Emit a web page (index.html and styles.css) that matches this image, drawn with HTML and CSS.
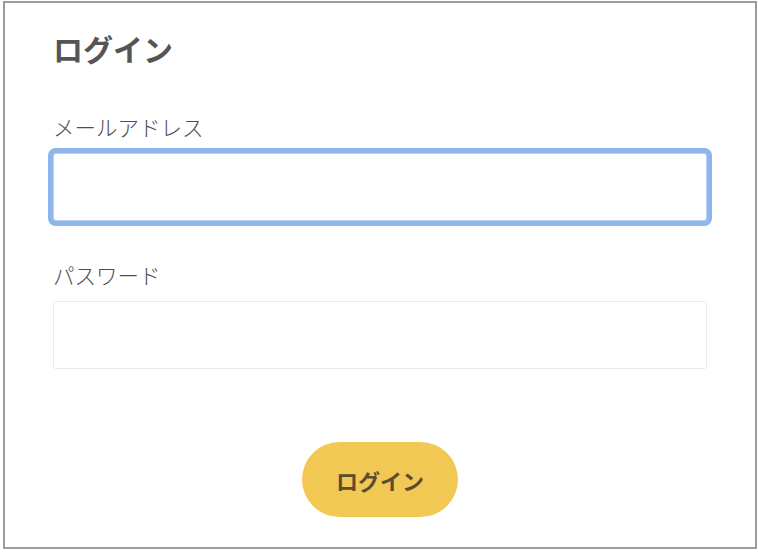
FILE: index.html
```html
<!DOCTYPE html>
<html lang="ja">
<head>
    <meta charset="UTF-8">
    <meta name="viewport" content="width=device-width, initial-scale=1.0">
    <title>ログイン</title>
    <link rel="stylesheet" href="styles.css">
</head>
<body>
    <div class="login-card">
        <h1 class="login-title">ログイン</h1>

        <form class="login-form">
            <div class="field">
                <label class="field-label" for="email">メールアドレス</label>
                <input class="field-input is-focused" id="email" type="email">
            </div>

            <div class="field">
                <label class="field-label" for="password">パスワード</label>
                <input class="field-input" id="password" type="password">
            </div>

            <div class="actions">
                <button class="login-button" type="button">ログイン</button>
            </div>
        </form>
    </div>
</body>
</html>
```

FILE: styles.css
```css
/* ページ全体 */
body {
    margin: 0;
    background-color: #fff;
    font-family: "Noto Sans CJK JP", "Noto Sans", sans-serif;
    color: #555;
}

/* ログインカード */
.login-card {
    box-sizing: border-box;
    width: 754px;
    height: 548px;
    margin: 1px 0 0 3px;
    padding: 25px 48px 0;
    border: 2px solid #9c9c9c;
    background-color: #fff;
}

/* 見出し */
.login-title {
    margin: 0 0 44px;
    font-size: 30px;
    line-height: 40px;
    font-weight: 700;
    color: #555;
}

/* 入力欄 */
.field {
    display: flex;
    flex-direction: column;
    margin-bottom: 39px;
}

.field-label {
    margin-bottom: 11px;
    font-size: 21.5px;
    line-height: 30px;
    font-weight: 300;
    color: #4f4f4f;
}

.field-input {
    box-sizing: border-box;
    width: 654px;
    height: 68px;
    padding: 0 16px;
    border: 1px solid #e8e8e8;
    border-radius: 3px;
    font-size: 20px;
    font-family: inherit;
    background-color: #fff;
    outline: none;
}

.field-input.is-focused {
    border-color: #b9d0f2;
    box-shadow: 0 0 0 5px #8fb6eb;
}

/* ボタン */
.actions {
    display: flex;
    justify-content: center;
    padding-top: 34px;
}

.login-button {
    width: 156px;
    height: 75px;
    border: none;
    border-radius: 38px;
    background-color: #f1c853;
    color: #5b4c30;
    font-family: inherit;
    font-size: 22px;
    font-weight: 700;
    cursor: pointer;
}
```
